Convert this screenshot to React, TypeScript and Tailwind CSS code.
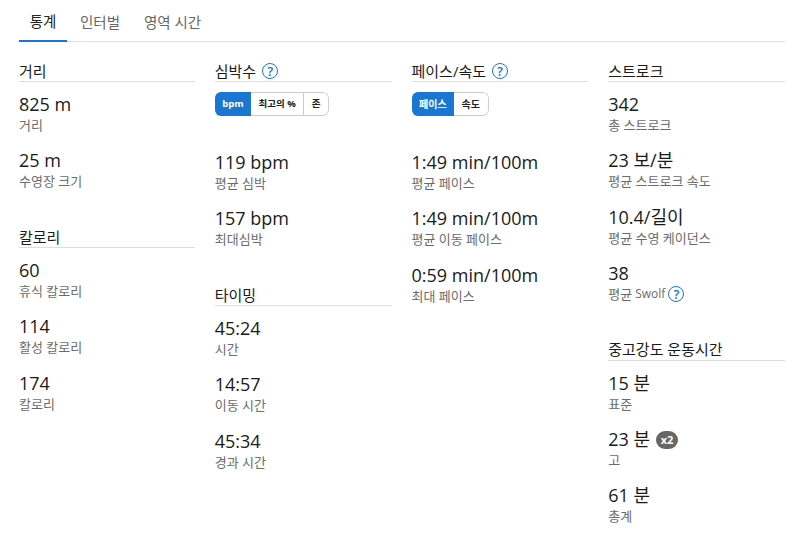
import React from 'react';

const font = 'font-["Open_Sans","Noto_Sans_CJK_KR",sans-serif]';

function Help() {
  return (
    <span className="inline-flex items-center justify-center w-4 h-4 rounded-full border-[1.5px] border-[#1976d2] text-[#1976d2] text-[13px] font-semibold leading-none">?</span>
  );
}

function Stat({ value, label, extra }: { value: string; label: React.ReactNode; extra?: React.ReactNode }) {
  return (
    <div className="h-[56.4px]">
      <div className="flex items-center gap-[6px] text-[18px] leading-[24px] text-[#1a1a1a]">{value}{extra}</div>
      <div className="text-[13px] leading-[18px] text-[#6b6b6b] flex items-center gap-[3px]">{label}</div>
    </div>
  );
}

function Heading({ children }: { children: React.ReactNode }) {
  return (
    <div className="flex items-center gap-[6px] h-[22px] pt-[1px] border-b border-[#ddd] text-[15px] text-[#1a1a1a] mb-[10px]">{children}</div>
  );
}

function Toggle({ items, size }: { items: string[]; size: string }) {
  return (
    <div className={`flex h-[24px] w-fit rounded-[6px] overflow-hidden font-bold text-[#222] mt-[2px] mb-[34px] ${size}`}>
      {items.map((t, i) => (
        <div
          key={t}
          className={`flex items-center px-[7.5px] ${i === 0 ? 'bg-[#1976d2] text-white' : 'border-y border-r border-[#ccc]'} ${i === items.length - 1 ? 'rounded-r-[6px]' : ''}`}
        >
          {t}
        </div>
      ))}
    </div>
  );
}

export default function App() {
  return (
    <div className={`${font} w-[793px] h-[547px] bg-white overflow-hidden pl-[19px] pr-[8px]`}>
      <div className="flex h-[42px] border-b border-[#ddd] text-[14.5px] text-[#666]">
        <div className="h-[42px] w-[48px] pt-[3px] flex items-center justify-center text-[#222] border-b-2 border-[#1976d2]">통계</div>
        <div className="ml-[13px] h-[42px] pt-[3px] w-[41px] flex items-center whitespace-nowrap">인터벌</div>
        <div className="ml-[23px] h-[42px] pt-[3px] flex items-center">영역 시간</div>
      </div>
      <div className="flex gap-[20px] pt-[18px]">
        <div className="w-[176px]">
          <Heading>거리</Heading>
          <Stat value="825 m" label="거리" />
          <Stat value="25 m" label="수영장 크기" />
          <div className="h-[21px]" />
          <Heading>칼로리</Heading>
          <Stat value="60" label="휴식 칼로리" />
          <Stat value="114" label="활성 칼로리" />
          <Stat value="174" label="칼로리" />
        </div>
        <div className="w-[177px]">
          <Heading>심박수 <Help /></Heading>
          <Toggle items={['bpm', '최고의 %', '존']} size="text-[9.5px]" />
          <Stat value="119 bpm" label="평균 심박" />
          <Stat value="157 bpm" label="최대심박" />
          <div className="h-[21px]" />
          <Heading>타이밍</Heading>
          <Stat value="45:24" label="시간" />
          <Stat value="14:57" label="이동 시간" />
          <Stat value="45:34" label="경과 시간" />
        </div>
        <div className="w-[177px]">
          <Heading>페이스/속도 <Help /></Heading>
          <Toggle items={['페이스', '속도']} size="text-[10px]" />
          <Stat value="1:49 min/100m" label="평균 페이스" />
          <Stat value="1:49 min/100m" label="평균 이동 페이스" />
          <Stat value="0:59 min/100m" label="최대 페이스" />
        </div>
        <div className="w-[177px]">
          <Heading>스트로크</Heading>
          <Stat value="342" label="총 스트로크" />
          <Stat value="23 보/분" label="평균 스트로크 속도" />
          <Stat value="10.4/길이" label="평균 수영 케이던스" />
          <Stat value="38" label={<>평균 <span className="text-[12px]">Swolf</span> <Help /></>} />
          <div className="h-[21px]" />
          <Heading>중고강도 운동시간</Heading>
          <Stat value="15 분" label="표준" />
          <Stat value="23 분" label="고" extra={<span className="inline-flex items-center justify-center w-[22px] h-[18px] mt-[2px] rounded-full bg-[#666] text-white text-[11px] font-bold">x2</span>} />
          <Stat value="61 분" label="총계" />
        </div>
      </div>
    </div>
  );
}
